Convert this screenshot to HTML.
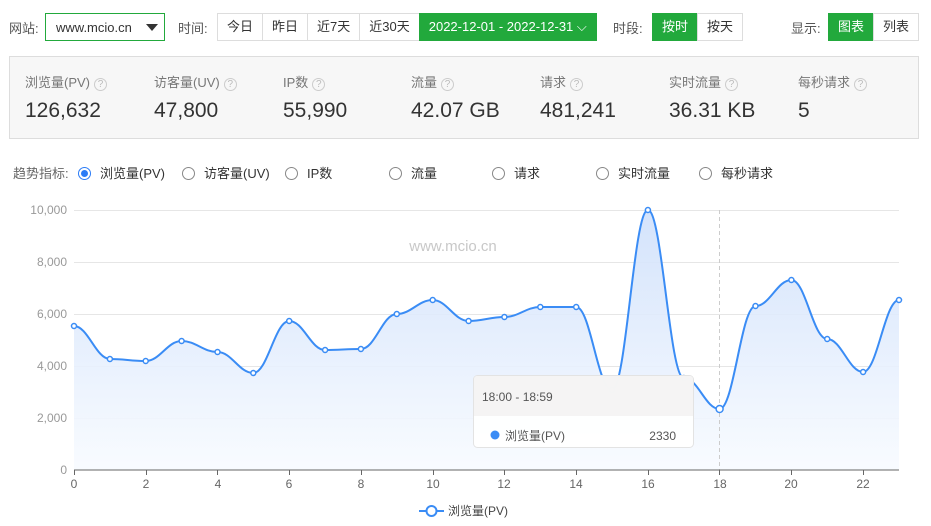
<!DOCTYPE html>
<html><head><meta charset="utf-8"><style>
*{box-sizing:border-box;margin:0;padding:0}
body{width:931px;height:526px;background:#fff;font-family:"Liberation Sans","Noto Sans CJK SC",sans-serif;color:#333;position:relative;overflow:hidden;font-size:13px}
.a{position:absolute}
.lbl{color:#555;font-size:13px}
.sel{left:45px;top:13px;width:120px;height:28px;border:1px solid #22a93c;font-size:13px;padding:6px 0 0 10px;color:#333}
.sel:after{content:"";position:absolute;right:6px;top:10px;border-left:6px solid transparent;border-right:6px solid transparent;border-top:7px solid #333}
.grp{display:flex;height:28px;top:13px}
.grp div{border:1px solid #ddd;margin-left:-1px;padding:0 9px;line-height:26px;font-size:13px;color:#333;background:#fff}
.grp .on{background:#22a93c;color:#fff;border-color:#22a93c}
.stats{left:9px;top:56px;width:910px;height:83px;background:#f7f7f7;border:1px solid #ddd}
.st{position:absolute;top:15px}
.st .t{font-size:13px;color:#777}
.q{display:inline-block;width:13px;height:13px;border:1px solid #ccc;border-radius:50%;font-size:10px;line-height:11px;text-align:center;color:#bbb;margin-left:4px;vertical-align:0}
.st .v{font-size:21px;color:#333;margin-top:8px}
.r{position:absolute;top:163px;font-size:13px;color:#333}
.r i{display:inline-block;width:13px;height:13px;border:1px solid #888;border-radius:50%;vertical-align:-2px;margin-right:9px;position:relative}
.r i.on{border-color:#2b7cf6}
.r i.on:after{content:"";position:absolute;left:2px;top:2px;width:7px;height:7px;border-radius:50%;background:#2b7cf6}
</style></head><body>
<div class="a lbl" style="left:9px;top:18px">网站:</div>
<div class="a sel">www.mcio.cn</div>
<div class="a lbl" style="left:178px;top:18px">时间:</div>
<div class="a grp" style="left:218px"><div>今日</div><div>昨日</div><div>近7天</div><div>近30天</div><div class="on">2022-12-01 - 2022-12-31 ⌵</div></div>
<div class="a lbl" style="left:613px;top:18px">时段:</div>
<div class="a grp" style="left:653px"><div class="on">按时</div><div>按天</div></div>
<div class="a lbl" style="left:791px;top:18px">显示:</div>
<div class="a grp" style="left:829px"><div class="on">图表</div><div>列表</div></div>

<div class="a stats">
<div class="st" style="left:15px"><div class="t">浏览量(PV)<span class="q">?</span></div><div class="v">126,632</div></div>
<div class="st" style="left:144px"><div class="t">访客量(UV)<span class="q">?</span></div><div class="v">47,800</div></div>
<div class="st" style="left:273px"><div class="t">IP数<span class="q">?</span></div><div class="v">55,990</div></div>
<div class="st" style="left:401px"><div class="t">流量<span class="q">?</span></div><div class="v">42.07 GB</div></div>
<div class="st" style="left:530px"><div class="t">请求<span class="q">?</span></div><div class="v">481,241</div></div>
<div class="st" style="left:659px"><div class="t">实时流量<span class="q">?</span></div><div class="v">36.31 KB</div></div>
<div class="st" style="left:788px"><div class="t">每秒请求<span class="q">?</span></div><div class="v">5</div></div>
</div>

<div class="a lbl" style="left:13px;top:163px;color:#666">趋势指标:</div>
<div class="r" style="left:78px"><i class="on"></i>浏览量(PV)</div>
<div class="r" style="left:182px"><i></i>访客量(UV)</div>
<div class="r" style="left:285px"><i></i>IP数</div>
<div class="r" style="left:389px"><i></i>流量</div>
<div class="r" style="left:492px"><i></i>请求</div>
<div class="r" style="left:596px"><i></i>实时流量</div>
<div class="r" style="left:699px"><i></i>每秒请求</div>

<svg class="a" style="left:0;top:0" width="931" height="526">
<defs><linearGradient id="g" x1="0" y1="0" x2="0" y2="1"><stop offset="0" stop-color="#cfe0fb"/><stop offset="1" stop-color="#f8fbff"/></linearGradient></defs>
<g stroke="#e6e6e6" stroke-width="1">
<line x1="74" x2="899" y1="210.5" y2="210.5"/><line x1="74" x2="899" y1="262.5" y2="262.5"/><line x1="74" x2="899" y1="314.5" y2="314.5"/><line x1="74" x2="899" y1="366.5" y2="366.5"/><line x1="74" x2="899" y1="418.5" y2="418.5"/>
</g>
<g font-size="12" fill="#999" text-anchor="end" font-family="Liberation Sans,sans-serif">
<text x="67" y="214">10,000</text><text x="67" y="266">8,000</text><text x="67" y="318">6,000</text><text x="67" y="370">4,000</text><text x="67" y="422">2,000</text><text x="67" y="474">0</text></g>
<text x="453" y="251" font-size="15" fill="#c8c8c8" text-anchor="middle" font-family="Liberation Sans,sans-serif">www.mcio.cn</text>
<path d="M74 326 C88 326 96 359 109.9 359 S131.4 361 145.7 361 S167.3 341 181.6 341 S203.2 352 217.5 352 S239 373 253.3 373 S274.9 321 289.2 321 S310.8 350 325.1 350 S346.6 349 360.9 349 S382.5 314 396.8 314 S418.4 300 432.7 300 S454.3 321 468.6 321 S490.1 317 504.4 317 S526 307 540.3 307 S561.9 307 576.2 307 S597.7 390 612 390 S633.6 210 647.9 210 S669.5 378 683.8 378 S705.3 409 719.6 409 S741.2 306 755.5 306 S777.1 280 791.4 280 S812.9 339 827.2 339 S848.8 372 863.1 372 S884.7 300 899 300 L899 470 L74 470 Z" fill="url(#g)" opacity="0.9"/>
<line x1="719.5" x2="719.5" y1="210" y2="470" stroke="#ccc" stroke-dasharray="4 3"/>
<path d="M74 326 C88 326 96 359 109.9 359 S131.4 361 145.7 361 S167.3 341 181.6 341 S203.2 352 217.5 352 S239 373 253.3 373 S274.9 321 289.2 321 S310.8 350 325.1 350 S346.6 349 360.9 349 S382.5 314 396.8 314 S418.4 300 432.7 300 S454.3 321 468.6 321 S490.1 317 504.4 317 S526 307 540.3 307 S561.9 307 576.2 307 S597.7 390 612 390 S633.6 210 647.9 210 S669.5 378 683.8 378 S705.3 409 719.6 409 S741.2 306 755.5 306 S777.1 280 791.4 280 S812.9 339 827.2 339 S848.8 372 863.1 372 S884.7 300 899 300" fill="none" stroke="#3a8cf5" stroke-width="2"/>
<g fill="#fff" stroke="#3a8cf5" stroke-width="1.5">
<circle cx="74" cy="326" r="2.5"/><circle cx="109.9" cy="359" r="2.5"/><circle cx="145.7" cy="361" r="2.5"/><circle cx="181.6" cy="341" r="2.5"/><circle cx="217.5" cy="352" r="2.5"/><circle cx="253.3" cy="373" r="2.5"/><circle cx="289.2" cy="321" r="2.5"/><circle cx="325.1" cy="350" r="2.5"/><circle cx="360.9" cy="349" r="2.5"/><circle cx="396.8" cy="314" r="2.5"/><circle cx="432.7" cy="300" r="2.5"/><circle cx="468.6" cy="321" r="2.5"/><circle cx="504.4" cy="317" r="2.5"/><circle cx="540.3" cy="307" r="2.5"/><circle cx="576.2" cy="307" r="2.5"/><circle cx="612" cy="390" r="2.5"/><circle cx="647.9" cy="210" r="2.5"/><circle cx="683.8" cy="378" r="2.5"/><circle cx="719.6" cy="409" r="3.5"/><circle cx="755.5" cy="306" r="2.5"/><circle cx="791.4" cy="280" r="2.5"/><circle cx="827.2" cy="339" r="2.5"/><circle cx="863.1" cy="372" r="2.5"/><circle cx="899" cy="300" r="2.5"/>
</g>
<line x1="74" x2="899" y1="470" y2="470" stroke="#666"/>
<g stroke="#666"><line x1="74.5" x2="74.5" y1="470" y2="475"/><line x1="146.5" x2="146.5" y1="470" y2="475"/><line x1="217.5" x2="217.5" y1="470" y2="475"/><line x1="289.5" x2="289.5" y1="470" y2="475"/><line x1="361.5" x2="361.5" y1="470" y2="475"/><line x1="433.5" x2="433.5" y1="470" y2="475"/><line x1="504.5" x2="504.5" y1="470" y2="475"/><line x1="576.5" x2="576.5" y1="470" y2="475"/><line x1="648.5" x2="648.5" y1="470" y2="475"/><line x1="719.5" x2="719.5" y1="470" y2="475"/><line x1="791.5" x2="791.5" y1="470" y2="475"/><line x1="863.5" x2="863.5" y1="470" y2="475"/></g>
<g font-size="12" fill="#666" text-anchor="middle" font-family="Liberation Sans,sans-serif">
<text x="74" y="488">0</text><text x="146" y="488">2</text><text x="218" y="488">4</text><text x="289" y="488">6</text><text x="361" y="488">8</text><text x="433" y="488">10</text><text x="504" y="488">12</text><text x="576" y="488">14</text><text x="648" y="488">16</text><text x="720" y="488">18</text><text x="791" y="488">20</text><text x="863" y="488">22</text></g>
<line x1="419" x2="444" y1="511" y2="511" stroke="#3a8cf5" stroke-width="2"/>
<circle cx="431.5" cy="511" r="5" fill="#fff" stroke="#3a8cf5" stroke-width="2"/>
<text x="448" y="515" font-size="12" fill="#444" font-family="Liberation Sans,Noto Sans CJK SC,sans-serif">浏览量(PV)</text>
<g>
<rect x="473.5" y="375.5" width="220" height="72" rx="4" fill="#fff" fill-opacity="0.92" stroke="#e3e3e3"/>
<path d="M474 379 Q474 376 477 376 L690 376 Q693 376 693 379 L693 416 L474 416 Z" fill="#f4f3f3" fill-opacity="0.92"/>
<text x="482" y="401" font-size="12" fill="#555" font-family="Liberation Sans,sans-serif">18:00 - 18:59</text>
<circle cx="495" cy="435" r="4.5" fill="#3a8cf5"/>
<text x="505" y="440" font-size="12" fill="#555" font-family="Liberation Sans,Noto Sans CJK SC,sans-serif">浏览量(PV)</text>
<text x="676" y="440" font-size="12" fill="#555" text-anchor="end" font-family="Liberation Sans,sans-serif">2330</text>
</g>
</svg>
</body></html>
